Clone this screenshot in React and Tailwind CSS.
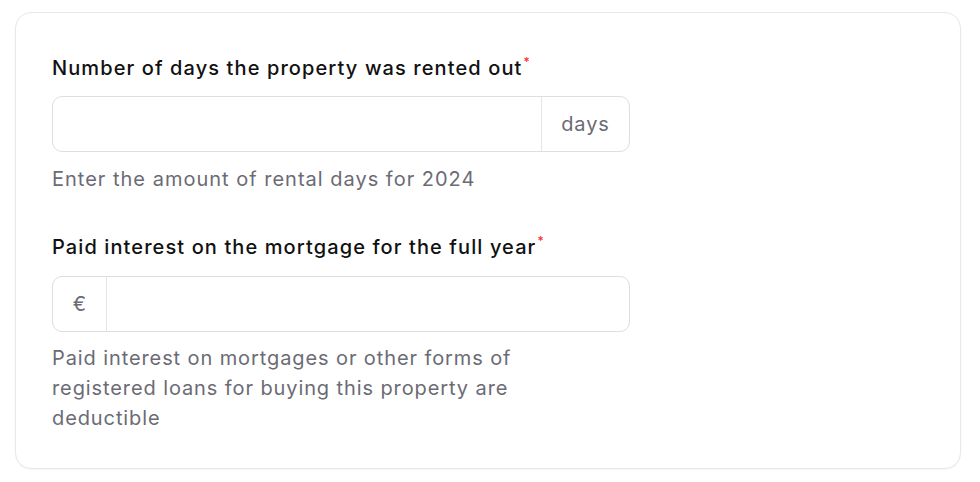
export default function App() {
  return (
    <div className="min-h-screen bg-white px-[15px] pt-[12px] font-['Inter','Noto_Sans',sans-serif]">
      <div className="w-[946px] rounded-2xl border border-[#e8e8e8] bg-white px-[36px] pt-[43px] pb-[35px] shadow-[0_1px_2px_rgba(0,0,0,0.04)]">
        <div className="flex flex-col">
          <label className="text-[20px] font-medium tracking-[1.1px] text-[#111] leading-[24px]">
            Number of days the property was rented out
            <span className="relative -top-[9px] ml-px text-[12px] leading-none text-red-500">*</span>
          </label>
          <div className="mt-[16px] flex h-[56px] w-[578px] rounded-[10px] border border-[#dedede] bg-white">
            <input className="min-w-0 flex-1 rounded-l-[10px] bg-transparent px-4 text-[20px] outline-none" />
            <div className="flex w-[88px] items-center justify-center border-l border-[#e5e5e5] text-[20px] tracking-[0.9px] text-[#6b6b75]">
              days
            </div>
          </div>
          <p className="mt-[12px] text-[20px] tracking-[1px] leading-[30px] text-[#6b6b75]">
            Enter the amount of rental days for 2024
          </p>
        </div>

        <div className="mt-[41px] flex flex-col">
          <label className="text-[20px] font-medium tracking-[1.1px] text-[#111] leading-[24px]">
            Paid interest on the mortgage for the full year
            <span className="relative -top-[9px] ml-px text-[12px] leading-none text-red-500">*</span>
          </label>
          <div className="mt-[17px] flex h-[56px] w-[578px] rounded-[10px] border border-[#dedede] bg-white">
            <div className="flex w-[54px] items-center justify-center border-r border-[#e5e5e5] text-[20px] text-[#6b6b75]">
              €
            </div>
            <input className="min-w-0 flex-1 rounded-r-[10px] bg-transparent px-4 text-[20px] outline-none" />
          </div>
          <p className="mt-[11px] max-w-[500px] text-[20px] tracking-[0.9px] leading-[30px] text-[#6b6b75]">
            Paid interest on mortgages or other forms of registered loans for buying this property are deductible
          </p>
        </div>
      </div>
    </div>
  );
}
